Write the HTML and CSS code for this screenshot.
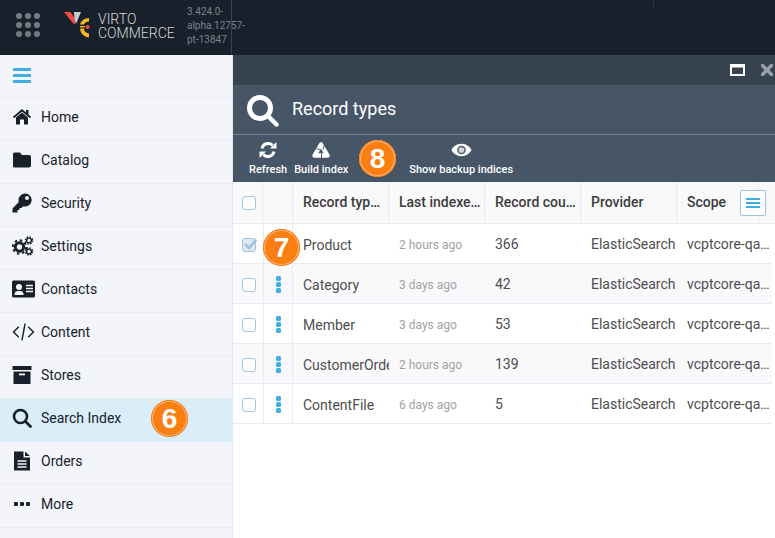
FILE: index.html
```html
<!DOCTYPE html>
<html lang="en">
<head>
    <meta charset="UTF-8">
    <meta name="viewport" content="width=device-width, initial-scale=1.0">
    <title>Record types</title>
    <link rel="stylesheet" href="styles.css">
</head>
<body>
    <!-- Top bar -->
    <header class="topbar">
        <div class="apps">
            <span></span><span></span><span></span>
            <span></span><span></span><span></span>
            <span></span><span></span><span></span>
        </div>
        <svg class="logo" viewBox="0 0 26 28">
            <path fill="#ef4a43" d="M0 1 H6.5 L12.5 9.5 L10 13.5 Z"/>
            <path fill="#c9cbce" d="M10 1 H17 L12 13 L10.5 8 Z"/>
            <path fill="#f6b91b" d="M25 7 A9.5 9.5 0 0 0 16 13.5 H20 A5.5 5.5 0 0 1 25 10.5 Z"/>
            <path fill="#f6b91b" d="M16 17.5 H20 A5.5 5.5 0 0 0 25 22.5 V26.5 A9.5 9.5 0 0 1 16 17.5 Z"/>
            <path stroke="#f6b91b" stroke-width="1.4" d="M16 15.7 H21"/>
            <circle cx="23.5" cy="16" r="2" fill="#ef4a43"/>
        </svg>
        <div class="brand">VIRTO<br>COMMERCE</div>
        <div class="version">3.424.0-<br>alpha.12757-<br>pt-13847</div>
        <i class="tick"></i>
    </header>

    <div class="main">
        <!-- Left menu -->
        <aside class="sidebar">
            <div class="burger"><span></span><span></span><span></span></div>
            <nav>
                <a class="nav-item">
                    <svg class="nav-icon" viewBox="0 0 20 20"><path d="M4 10.5 L10 5.5 L16 10.5 V17.5 H12 V12.5 H8 V17.5 H4 Z"/><path d="M1.5 10.5 L10 3.2 L18.5 10.5" fill="none" stroke="#18202b" stroke-width="1.8"/><path d="M14 3 H16.5 V7.5 H14 Z"/></svg>
                    Home
                </a>
                <a class="nav-item">
                    <svg class="nav-icon" viewBox="0 0 20 20"><path d="M2.5 2.5 H8 L10 5 H17 A2 2 0 0 1 19 7 V15.5 A2 2 0 0 1 17 17.5 H2.5 A1.5 1.5 0 0 1 1 16 V4 A1.5 1.5 0 0 1 2.5 2.5 Z"/></svg>
                    Catalog
                </a>
                <a class="nav-item">
                    <svg class="nav-icon" viewBox="0 0 20 20"><path fill-rule="evenodd" d="M13 0.5 A6.5 6.5 0 1 1 11.2 13.2 L9.5 15 H7.5 V17 H5.5 V19.5 H0.5 V15.5 L6.8 9 A6.5 6.5 0 0 1 13 0.5 Z M15 3 A2 2 0 1 0 15 7 A2 2 0 1 0 15 3 Z"/></svg>
                    Security
                </a>
                <a class="nav-item">
                    <svg class="nav-icon cogs" viewBox="0 0 22 20">
                        <circle cx="7.5" cy="11" r="4.2" fill="none" stroke="#18202b" stroke-width="3"/>
                        <circle cx="7.5" cy="11" r="6.7" fill="none" stroke="#18202b" stroke-width="2" stroke-dasharray="2.6 2.66"/>
                        <circle cx="17" cy="4.5" r="2.4" fill="none" stroke="#18202b" stroke-width="1.4"/>
                        <circle cx="17" cy="4.5" r="3.6" fill="none" stroke="#18202b" stroke-width="1.4" stroke-dasharray="1.5 1.33"/>
                        <circle cx="17" cy="15.5" r="2.4" fill="none" stroke="#18202b" stroke-width="1.4"/>
                        <circle cx="17" cy="15.5" r="3.6" fill="none" stroke="#18202b" stroke-width="1.4" stroke-dasharray="1.5 1.33"/>
                    </svg>
                    Settings
                </a>
                <a class="nav-item">
                    <svg class="nav-icon wide" viewBox="0 0 23 17"><rect width="23" height="17" rx="1.5"/><circle cx="7" cy="6.5" r="3" fill="#f4f5fa"/><path d="M2.5 14.5 V13 A3 3 0 0 1 5.5 10.5 H8.5 A3 3 0 0 1 11.5 13 V14.5 Z" fill="#f4f5fa"/><path d="M14 5 H21 M14 8 H21 M14 11 H21" stroke="#f4f5fa" stroke-width="1.4"/></svg>
                    Contacts
                </a>
                <a class="nav-item">
                    <svg class="nav-icon wide" viewBox="0 0 22 18"><path d="M6.5 4 L1.5 9 L6.5 14 M15.5 4 L20.5 9 L15.5 14 M12.5 1 L9.5 17" fill="none" stroke="#18202b" stroke-width="1.4"/></svg>
                    Content
                </a>
                <a class="nav-item">
                    <svg class="nav-icon" viewBox="0 0 20 20"><path d="M0.5 1 H19.5 V5 H0.5 Z M1.5 6.5 H18.5 V19 H1.5 Z"/><rect x="7" y="8.5" width="6" height="1.8" fill="#f4f5fa"/></svg>
                    Stores
                </a>
                <a class="nav-item active">
                    <svg class="nav-icon" viewBox="0 0 20 20"><circle cx="8.5" cy="8.5" r="6.5" fill="none" stroke="#18202b" stroke-width="2.6"/><path d="M13.5 13.5 L18.5 18.5" stroke="#18202b" stroke-width="2.8" stroke-linecap="round"/></svg>
                    Search Index
                </a>
                <a class="nav-item">
                    <svg class="nav-icon" viewBox="0 0 20 20"><path d="M2 0.5 H11.5 V6.5 H18 V19.5 H2 Z M13 0.5 L18 5 H13 Z"/><path d="M5.5 10 H14.5 M5.5 13 H14.5 M5.5 16 H14.5" stroke="#f4f5fa" stroke-width="1.4"/></svg>
                    Orders
                </a>
                <a class="nav-item">
                    <svg class="nav-icon" viewBox="0 0 20 20"><rect x="2" y="8" width="4" height="4" rx="1"/><rect x="8" y="8" width="4" height="4" rx="1"/><rect x="14" y="8" width="4" height="4" rx="1"/></svg>
                    More
                </a>
            </nav>
        </aside>

        <!-- Blade -->
        <section class="blade">
            <div class="blade-top">
                <svg class="win-max" viewBox="0 0 15 12"><path fill-rule="evenodd" d="M0 0 H15 V12 H0 Z M2 3.5 V10 H13 V3.5 Z"/></svg>
                <svg class="win-close" viewBox="0 0 12 12"><path d="M1.5 1.5 L10.5 10.5 M10.5 1.5 L1.5 10.5" stroke="#9aa2aa" stroke-width="3.4" stroke-linecap="round"/></svg>
            </div>
            <div class="blade-title">
                <svg class="title-icon" viewBox="0 0 32 32"><circle cx="13" cy="13" r="10.5" fill="none" stroke="#fff" stroke-width="5"/><path d="M21 21 L29.5 29.5" stroke="#fff" stroke-width="4.5" stroke-linecap="round"/></svg>
                <h1>Record types</h1>
            </div>
            <div class="toolbar">
                <div class="tool">
                    <svg viewBox="0 0 18 18"><path d="M3 7.5 A6.3 6.3 0 0 1 13.6 4.4" fill="none" stroke="#fff" stroke-width="3"/><path d="M11 7.5 H17.5 V1 Z" fill="#fff"/><path d="M15 10.5 A6.3 6.3 0 0 1 4.4 13.6" fill="none" stroke="#fff" stroke-width="3"/><path d="M7 10.5 H0.5 V17 Z" fill="#fff"/></svg>
                    <span>Refresh</span>
                </div>
                <div class="tool">
                    <svg viewBox="0 0 18 18">
                        <path d="M9 3.5 L15.5 14.5 H2.5 Z" fill="#465667" stroke="#fff" stroke-width="4.4" stroke-linejoin="round"/>
                        <path d="M12.5 3.5 L11 8.5 M4.5 7.5 L9 9.5 M9.5 18 V12.5" stroke="#465667" stroke-width="1"/>
                    </svg>
                    <span>Build index</span>
                </div>
                <div class="tool tool-gap">
                    <svg viewBox="0 0 22 14"><path fill-rule="evenodd" fill="#fff" d="M11 0.5 C16 0.5 19.8 3.6 21.5 7 C19.8 10.4 16 13.5 11 13.5 C6 13.5 2.2 10.4 0.5 7 C2.2 3.6 6 0.5 11 0.5 Z M11 2.5 A4.5 4.5 0 1 0 11 11.5 A4.5 4.5 0 1 0 11 2.5 Z"/><circle cx="11" cy="7" r="3" fill="#fff" opacity=".75"/></svg>
                    <span>Show backup indices</span>
                </div>
            </div>

            <div class="table">
                <div class="row head">
                    <div class="cell check"><i class="box"></i></div>
                    <div class="cell dots-cell"></div>
                    <div class="cell">Record type name</div>
                    <div class="cell">Last indexed date</div>
                    <div class="cell">Record count</div>
                    <div class="cell">Provider</div>
                    <div class="cell">Scope</div>
                </div>
                <div class="row">
                    <div class="cell check">
                        <i class="box checked"><svg viewBox="0 0 16 14"><path d="M3 6 L7 10 L14.5 1.5" fill="none" stroke="#a3c3da" stroke-width="2.6"/></svg></i>
                    </div>
                    <div class="cell dots-cell"><i class="dots"></i></div>
                    <div class="cell low">Product</div>
                    <div class="cell low time">2 hours ago</div>
                    <div class="cell">366</div>
                    <div class="cell">ElasticSearch</div>
                    <div class="cell">vcptcore-qa-index</div>
                </div>
                <div class="row">
                    <div class="cell check"><i class="box"></i></div>
                    <div class="cell dots-cell"><i class="dots"></i></div>
                    <div class="cell low">Category</div>
                    <div class="cell low time">3 days ago</div>
                    <div class="cell">42</div>
                    <div class="cell">ElasticSearch</div>
                    <div class="cell">vcptcore-qa-index</div>
                </div>
                <div class="row">
                    <div class="cell check"><i class="box"></i></div>
                    <div class="cell dots-cell"><i class="dots"></i></div>
                    <div class="cell low">Member</div>
                    <div class="cell low time">3 days ago</div>
                    <div class="cell">53</div>
                    <div class="cell">ElasticSearch</div>
                    <div class="cell">vcptcore-qa-index</div>
                </div>
                <div class="row">
                    <div class="cell check"><i class="box"></i></div>
                    <div class="cell dots-cell"><i class="dots"></i></div>
                    <div class="cell low clip">CustomerOrder</div>
                    <div class="cell low time">2 hours ago</div>
                    <div class="cell">139</div>
                    <div class="cell">ElasticSearch</div>
                    <div class="cell">vcptcore-qa-index</div>
                </div>
                <div class="row">
                    <div class="cell check"><i class="box"></i></div>
                    <div class="cell dots-cell"><i class="dots"></i></div>
                    <div class="cell low">ContentFile</div>
                    <div class="cell low time">6 days ago</div>
                    <div class="cell">5</div>
                    <div class="cell">ElasticSearch</div>
                    <div class="cell">vcptcore-qa-index</div>
                </div>
                <div class="grid-menu"><span></span><span></span><span></span></div>
            </div>
        </section>
    </div>

    <!-- Numbered callouts -->
    <div class="badge badge-6">6</div>
    <div class="badge badge-7">7</div>
    <div class="badge badge-8">8</div>
</body>
</html>
```

FILE: styles.css
```css
:root {
    --dark: #18202b;
    --menu-bg: #f4f5fa;
    --line: #e8ebf2;
    --blue: #3fade6;
    --box: #a3c4dc;
}

html, body {
    margin: 0;
    padding: 0;
}

body {
    position: relative;
    width: 775px;
    height: 538px;
    overflow: hidden;
    font-family: Roboto, "Liberation Sans", sans-serif;
    background-color: #fff;
}

/* top bar */
.topbar {
    position: relative;
    display: flex;
    align-items: flex-start;
    height: 55px;
    background-color: var(--dark);
}

.apps {
    display: grid;
    grid-template-columns: repeat(3, 6px);
    gap: 3px;
    margin: 13px 0 0 16px;
}

.apps span {
    width: 6px;
    height: 6px;
    border-radius: 50%;
    background-color: #747b84;
}

.logo {
    width: 26px;
    height: 28px;
    margin: 11px 0 0 24px;
}

.brand {
    width: 89px;
    margin: 12px 0 0 8px;
    font-size: 14px;
    font-weight: 300;
    line-height: 14px;
    color: #d5d7da;
}

.version {
    width: 45px;
    height: 55px;
    padding: 5px 0 0 0;
    box-sizing: border-box;
    border-right: 1px solid #37434f;
    font-size: 10px;
    line-height: 14px;
    color: #7b838c;
    white-space: nowrap;
}

.tick {
    position: absolute;
    left: 653px;
    top: 0;
    width: 1px;
    height: 8px;
    background-color: #2c3641;
}

/* left menu */
.main {
    display: flex;
    height: 483px;
}

.sidebar {
    flex: 0 0 232px;
    border-right: 1px solid #e6e8f0;
    background-color: var(--menu-bg);
}

.burger {
    display: flex;
    flex-direction: column;
    gap: 3px;
    height: 43px;
    box-sizing: border-box;
    padding: 13px 0 0 13px;
    border-bottom: 1px solid var(--line);
}

.burger span {
    width: 18px;
    height: 3px;
    background-color: var(--blue);
}

.nav-item {
    display: flex;
    align-items: center;
    height: 43px;
    box-sizing: border-box;
    padding: 0 0 5px 12px;
    border-bottom: 1px solid var(--line);
    font-size: 14px;
    color: var(--dark);
}

.nav-item.active {
    background-color: #d9eef9;
    border-bottom-color: #d9eef9;
}

.nav-icon {
    flex: none;
    width: 20px;
    height: 20px;
    margin-right: 9px;
    fill: var(--dark);
}

.nav-icon.cogs {
    width: 22px;
    margin-right: 7px;
}

.nav-icon.wide {
    width: 23px;
    margin-right: 6px;
}

/* blade */
.blade {
    flex: 1;
    min-width: 0;
}

.blade-top {
    display: flex;
    align-items: center;
    justify-content: flex-end;
    height: 30px;
    padding-right: 2px;
    background-color: #37434f;
}

.win-max {
    width: 15px;
    height: 12px;
    fill: #fff;
    margin-right: 16px;
}

.win-close {
    width: 12px;
    height: 12px;
}

.blade-title {
    display: flex;
    align-items: center;
    height: 50px;
    padding-left: 14px;
    box-sizing: border-box;
    border-bottom: 1px solid #75828f;
    background-color: #465667;
}

.title-icon {
    width: 32px;
    height: 32px;
    margin: 2px 13px 0 0;
}

.blade-title h1 {
    margin: -2px 0 0;
    font-size: 18px;
    font-weight: 400;
    color: #fff;
}

.toolbar {
    display: flex;
    height: 47px;
    padding-left: 16px;
    box-sizing: border-box;
    background-color: #465667;
}

.tool {
    display: flex;
    flex-direction: column;
    align-items: center;
    margin-right: 7px;
    padding-top: 6px;
    font-size: 11px;
    font-weight: 500;
    color: #fff;
}

.tool svg {
    width: 18px;
    height: 18px;
    margin-bottom: 4px;
}

.tool-gap {
    margin-left: 54px;
}

.tool-gap svg {
    width: 21px;
}

/* table */
.table {
    position: relative;
    font-size: 14px;
    color: #4e4e4e;
}

.row {
    display: grid;
    grid-template-columns: 30px 30px 96px 96px 96px 96px 95px;
    height: 40px;
    width: 539px;
    box-sizing: border-box;
    border-bottom: 1px solid var(--line);
}

.row:nth-child(odd) {
    background-color: #f9f9fc;
}

.row.head {
    grid-template-columns: 30px 30px 96px 96px 96px 96px 82px;
    width: 542px;
    height: 42px;
    background-color: #f9f9f9;
    font-weight: 500;
    color: #3d3d3d;
}

.cell {
    display: block;
    min-width: 0;
    overflow: hidden;
    padding: 0 1px 0 10px;
    line-height: 41px;
    white-space: nowrap;
    text-overflow: ellipsis;
}

.cell.low {
    line-height: 43px;
}

.row.head .cell {
    padding-right: 2px;
    line-height: 40px;
    border-right: 1px solid var(--line);
}

.cell.clip {
    padding-right: 0;
    text-overflow: clip;
}

.cell.time {
    font-size: 12px;
    color: #a2a2a2;
}

.cell.check {
    display: flex;
    align-items: center;
    padding: 3px 0 0 9px;
}

.row.head .cell.check {
    padding: 0 0 0 9px;
}

.cell.dots-cell {
    display: flex;
    align-items: center;
    padding: 2px 0 0 12px;
    border-left: 1px solid var(--line);
    border-right: 1px solid var(--line);
}

.row.head .dots-cell {
    border-left: 0;
}

.box {
    position: relative;
    display: block;
    width: 14px;
    height: 14px;
    box-sizing: border-box;
    border: 1.5px solid var(--box);
    border-radius: 3px;
    background-color: #fff;
}

.box.checked {
    background-color: #dfe9f1;
}

.box svg {
    position: absolute;
    left: -1px;
    top: -1px;
    width: 16px;
    height: 14px;
}

.dots {
    display: block;
    width: 5px;
    height: 5px;
    border-radius: 1.5px;
    background-color: var(--blue);
    box-shadow: 0 -6px 0 var(--blue), 0 6px 0 var(--blue);
}

.grid-menu {
    position: absolute;
    top: 8px;
    right: 9px;
    display: flex;
    flex-direction: column;
    justify-content: center;
    gap: 2px;
    width: 26px;
    height: 26px;
    box-sizing: border-box;
    padding: 0 5px;
    border: 1px solid #9cc3dd;
    border-radius: 2px;
    background-color: #fff;
}

.grid-menu span {
    height: 2px;
    background-color: var(--blue);
}

/* callouts */
.badge {
    position: absolute;
    width: 37px;
    height: 37px;
    border-radius: 50%;
    background-color: #f97f12;
    box-shadow: inset 0 0 0 1px #f97f12, inset 0 0 0 2px #fbb27a;
    font-family: "Liberation Sans", sans-serif;
    font-size: 28px;
    font-weight: 700;
    line-height: 37px;
    text-align: center;
    color: #fff;
}

.badge-6 {
    left: 151px;
    top: 400px;
}

.badge-7 {
    left: 263px;
    top: 229px;
}

.badge-8 {
    left: 359px;
    top: 140px;
}
```
